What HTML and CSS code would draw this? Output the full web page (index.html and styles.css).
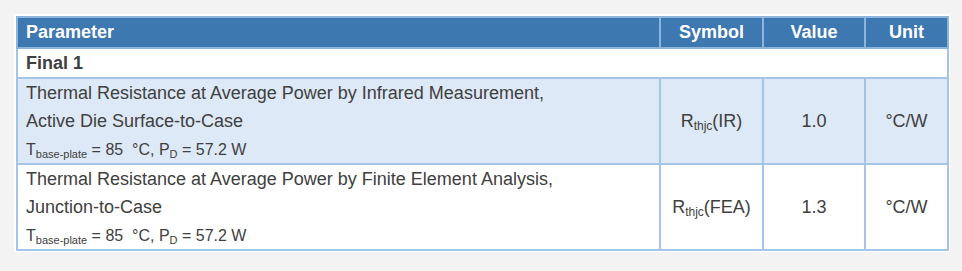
FILE: index.html
```html
<!DOCTYPE html>
<html>
<head>
<meta charset="utf-8">
<link rel="stylesheet" href="styles.css">
</head>
<body>
<div class="panel">
<table class="spec">
<thead>
<tr>
<th class="c-param">Parameter</th>
<th class="c-sym">Symbol</th>
<th class="c-val">Value</th>
<th class="c-unit">Unit</th>
</tr>
</thead>
<tbody>
<tr class="group">
<td colspan="4">Final 1</td>
</tr>
<tr class="alt">
<td class="param">Thermal Resistance at Average Power by Infrared Measurement,<br>Active Die Surface-to-Case<div class="cond">T<sub>base-plate</sub> = 85 &nbsp;°C, P<sub>D</sub> = 57.2 W</div></td>
<td class="center">R<sub>thjc</sub>(IR)</td>
<td class="center">1.0</td>
<td class="center">°C/W</td>
</tr>
<tr>
<td class="param">Thermal Resistance at Average Power by Finite Element Analysis,<br>Junction-to-Case<div class="cond">T<sub>base-plate</sub> = 85 &nbsp;°C, P<sub>D</sub> = 57.2 W</div></td>
<td class="center">R<sub>thjc</sub>(FEA)</td>
<td class="center">1.3</td>
<td class="center">°C/W</td>
</tr>
</tbody>
</table>
</div>
</body>
</html>
```
FILE: styles.css
```css
html, body {
  margin: 0;
  padding: 0;
  background: #f3f3f3;
}
body {
  padding: 14px 12px 0 14px;
  font-family: "Liberation Sans", Arial, sans-serif;
  color: #404040;
}
.panel {
  background: #fff;
  padding: 2px 3px 1px 2px;
  width: 931px;
}
.spec {
  width: 931px;
  border-collapse: collapse;
  border: 2px solid #a3c5e6;
  table-layout: fixed;
}
.spec th, .spec td {
  border: 2px solid #a3c5e6;
  padding: 0 8px;
}
.spec th {
  background: #3d78b1;
  color: #fff;
  font-size: 18px;
  font-weight: bold;
  height: 29px;
  line-height: 29px;
  text-align: center;
  border-color: #8db5dc;
}
.spec th.c-param { text-align: left; width: 625px; }
.spec th.c-sym { width: 85px; }
.spec th.c-val { width: 84px; }
.spec th.c-unit { width: 65px; }
.group td {
  font-weight: bold;
  font-size: 18px;
  height: 28px;
  line-height: 28px;
  background: #fff;
}
.alt td { background: #dde9f6; }
.param {
  font-size: 18px;
  line-height: 28px;
}
.center {
  text-align: center;
  font-size: 18px;
}
sub {
  font-size: 12px;
  vertical-align: -3px;
  line-height: 0;
}
.cond {
  font-size: 16px;
  line-height: 27px;
  padding-top: 1px;
}
.cond sub { font-size: 11px; }
```
